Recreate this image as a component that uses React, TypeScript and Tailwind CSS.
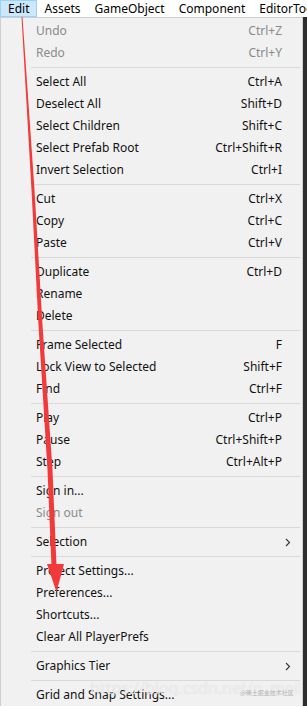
import { Fragment } from "react";

type Item = { label: string; keys?: string; disabled?: boolean; sub?: boolean };

const groups: Item[][] = [
  [
    { label: "Undo", keys: "Ctrl+Z", disabled: true },
    { label: "Redo", keys: "Ctrl+Y", disabled: true },
  ],
  [
    { label: "Select All", keys: "Ctrl+A" },
    { label: "Deselect All", keys: "Shift+D" },
    { label: "Select Children", keys: "Shift+C" },
    { label: "Select Prefab Root", keys: "Ctrl+Shift+R" },
    { label: "Invert Selection", keys: "Ctrl+I" },
  ],
  [
    { label: "Cut", keys: "Ctrl+X" },
    { label: "Copy", keys: "Ctrl+C" },
    { label: "Paste", keys: "Ctrl+V" },
  ],
  [
    { label: "Duplicate", keys: "Ctrl+D" },
    { label: "Rename" },
    { label: "Delete" },
  ],
  [
    { label: "Frame Selected", keys: "F" },
    { label: "Lock View to Selected", keys: "Shift+F" },
    { label: "Find", keys: "Ctrl+F" },
  ],
  [
    { label: "Play", keys: "Ctrl+P" },
    { label: "Pause", keys: "Ctrl+Shift+P" },
    { label: "Step", keys: "Ctrl+Alt+P" },
  ],
  [{ label: "Sign in..." }, { label: "Sign out", disabled: true }],
  [{ label: "Selection", sub: true }],
  [
    { label: "Project Settings..." },
    { label: "Preferences..." },
    { label: "Shortcuts..." },
    { label: "Clear All PlayerPrefs" },
  ],
  [{ label: "Graphics Tier", sub: true }],
  [{ label: "Grid and Snap Settings..." }],
];

const menus = ["Edit", "Assets", "GameObject", "Component", "EditorTools"];

function Row({ item }: { item: Item }) {
  return (
    <div className={`flex h-[22px] items-center pl-[35px] pr-[20px] ${item.disabled ? "text-[#8a8a8a]" : "text-[#111]"}`}>
      <span className="flex-1 whitespace-nowrap">{item.label}</span>
      {item.keys ? <span className="whitespace-nowrap">{item.keys}</span> : null}
      {item.sub ? (
        <svg width="6" height="9" viewBox="0 0 6 9" className="mr-[-9px]">
          <path d="M1 1l3.5 3.5L1 8" fill="none" stroke="#333" strokeWidth="1.1" />
        </svg>
      ) : null}
    </div>
  );
}

export default function App() {
  return (
    <div className="relative h-[707px] w-[307px] overflow-hidden bg-white text-[12px] font-['Noto_Sans',sans-serif]">
      <div className="flex h-[17px] items-center whitespace-nowrap bg-white leading-none">
        {menus.map((m, i) => (
          <span
            key={m}
            className={`flex h-[17px] items-center px-[7px] ${i === 0 ? "border border-[#99d1ff] bg-[#cce8ff]" : ""}`}
          >
            {m}
          </span>
        ))}
      </div>
      <div className="flex">
        <div className="w-[303px] border-l border-r border-t border-[#cfcfcf] bg-[#f1f1f1] pt-[2px]">
          {groups.map((g, gi) => (
            <Fragment key={gi}>
              {gi > 0 ? (
                <div className="flex h-[7px] items-center pl-[30px] pr-[2px]">
                  <div className="h-px w-full bg-[#d9d9d9]" />
                </div>
              ) : null}
              {g.map((item) => (
                <Row key={item.label} item={item} />
              ))}
            </Fragment>
          ))}
        </div>
        <div className="flex-1 bg-[#2e2e2e]" />
      </div>

      <svg className="pointer-events-none absolute left-0 top-0" width="307" height="707" viewBox="0 0 307 707">
        <polygon
          points="21.5,17 31.5,190 38.5,325 47.5,470 51.5,566 56.5,566 52.5,470 42.5,325 34.5,190 22.5,17"
          fill="#f23a3a"
        />
        <polygon points="47,564 64,564 56.5,592" fill="#f23a3a" />
      </svg>

      <div className="pointer-events-none absolute left-[90px] top-[680px] w-[210px] overflow-hidden whitespace-nowrap text-[16px] leading-none text-white/50 [text-shadow:0_0_1px_#d4d4d4]">
        https://blog.csdn.net/n_meiling
      </div>
      <div className="pointer-events-none absolute left-[240px] top-[690px] whitespace-nowrap text-[6px] leading-none text-[#b4b4b4] font-['Noto_Sans_CJK_SC',sans-serif]">
        @稀土掘金技术社区
      </div>
    </div>
  );
}
